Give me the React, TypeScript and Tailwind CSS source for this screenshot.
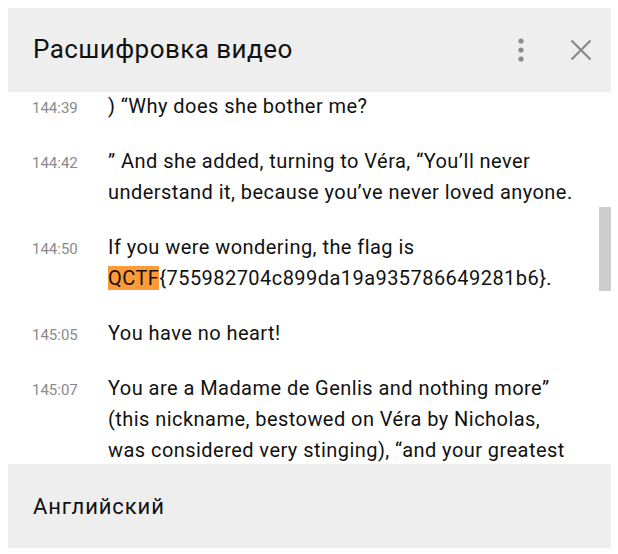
const rows = [
  { time: "144:39", text: <>) “Why does she bother me?</> },
  {
    time: "144:42",
    text: <>” And she added, turning to Véra, “You’ll never understand it, because you’ve never loved anyone.</>,
  },
  {
    time: "144:50",
    text: (
      <>
        If you were wondering, the flag is <span className="bg-[#fe9a37]">QCTF</span>
        {"{755982704c899da19a935786649281b6}."}
      </>
    ),
  },
  { time: "145:05", text: <>You have no heart!</> },
  {
    time: "145:07",
    text: (
      <>
        You are a Madame de Genlis and nothing more” (this nickname, bestowed on Véra by Nicholas, was considered
        very stinging), “and your greatest delight is to make things unpleasant for people.
      </>
    ),
  },
];

const App = () => {
  return (
    <div className="w-[618px] h-[554px] bg-white p-2 font-[Roboto,sans-serif] text-[#111111]">
      <div className="w-[603px] h-[540px] flex flex-col">
        {/* header */}
        <div className="h-[84px] shrink-0 bg-[#eeeeee] flex items-center justify-between pl-[25px] pr-[19px]">
          <h1 className="text-[26px] tracking-[0.45px] pb-[2px]">Расшифровка видео</h1>
          <div className="flex items-center gap-x-[44px]">
            <svg width="10" height="24" viewBox="0 0 10 24" fill="#8a8a8a">
              <circle cx="5" cy="3" r="2.6" />
              <circle cx="5" cy="12" r="2.6" />
              <circle cx="5" cy="21" r="2.6" />
            </svg>
            <svg width="22" height="22" viewBox="0 0 22 22" stroke="#8a8a8a" strokeWidth="2.3">
              <path d="M1.5 1.5L20.5 20.5M20.5 1.5L1.5 20.5" />
            </svg>
          </div>
        </div>

        {/* transcript */}
        <div className="relative h-[372px] overflow-hidden">
          <div className="flex flex-col gap-y-[24px] pl-6 -mt-[1px]">
            {rows.map((row) => (
              <div key={row.time} className="flex items-baseline">
                <p className="w-[76px] shrink-0 text-[15px] text-[#8a8a8a]">{row.time}</p>
                <p className="w-[474px] text-[20px] tracking-[0.45px] leading-[31px]">{row.text}</p>
              </div>
            ))}
          </div>
          <div className="absolute right-0 top-[115px] w-3 h-[84px] bg-[#cdcdcd]" />
        </div>

        {/* footer */}
        <div className="h-[84px] shrink-0 bg-[#eeeeee] flex items-center pl-[25px]">
          <p className="text-[22px] tracking-[0.9px]">Английский</p>
        </div>
      </div>
    </div>
  );
};

export default App;
